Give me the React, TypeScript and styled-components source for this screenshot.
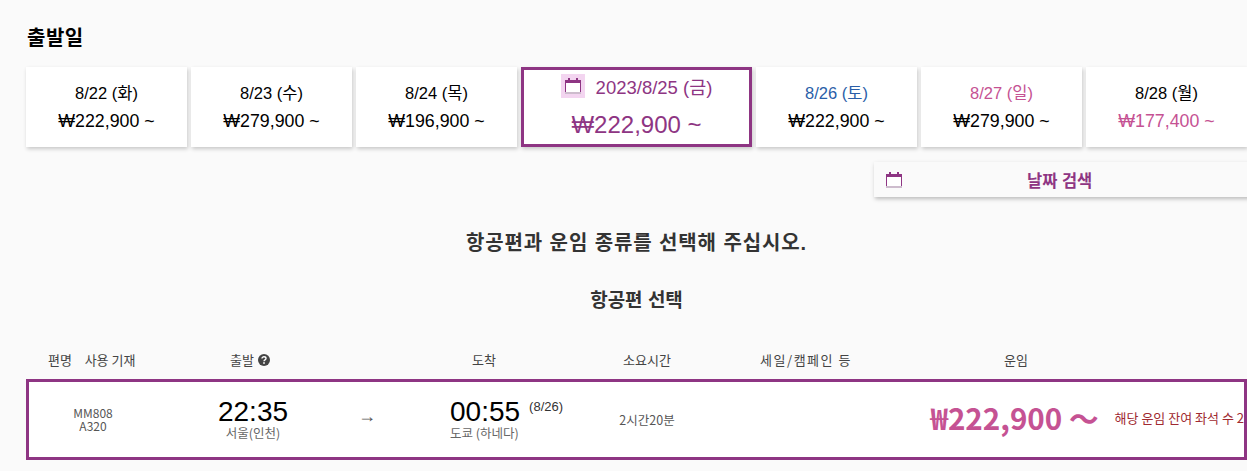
import React from 'react'
import styled, { createGlobalStyle } from 'styled-components'

const purple = '#8e3583'
const pink = '#c55293'
const sans = `"Liberation Sans", "Noto Sans CJK KR", sans-serif`
const noto = `"Noto Sans CJK KR", sans-serif`

const GlobalStyle = createGlobalStyle`
  html, body {
    margin: 0;
    padding: 0;
    background: #fafafa;
  }
`
const Page = styled.div`
  width: 1247px;
  height: 471px;
  box-sizing: border-box;
  padding: 26px 0 0 26px;
  overflow: hidden;
  font-family: ${sans};
  background: #fafafa;
`
const Title = styled.h2`
  margin: 0;
  height: 41px;
  padding-left: 1px;
  font-size: 20px;
  line-height: 24px;
  letter-spacing: 0.5px;
  font-weight: 700;
  color: #000;
`
const DateRow = styled.div`
  display: flex;
  gap: 4px;
  height: 80px;
`
const DateCard = styled.div`
  flex: 0 0 161px;
  display: flex;
  flex-direction: column;
  align-items: center;
  padding-top: 15px;
  box-sizing: border-box;
  background: #fff;
  box-shadow: 1px 2px 4px rgba(0, 0, 0, 0.2);
`
const DateLabel = styled.div<{ $tone?: string }>`
  font-size: 16.5px;
  line-height: 22px;
  color: ${(p) => p.$tone ?? '#000'};
`
const Price = styled.div<{ $tone?: string }>`
  margin-top: 6px;
  font-size: 17.8px;
  line-height: 22px;
  color: ${(p) => p.$tone ?? '#000'};
`
const SelectedCard = styled.div`
  flex: 0 0 231px;
  display: flex;
  flex-direction: column;
  align-items: center;
  box-sizing: border-box;
  padding-top: 4px;
  background: #fff;
  border: 3px solid ${purple};
  box-shadow: 1px 2px 4px rgba(0, 0, 0, 0.2);
  color: ${purple};
`
const SelectedHead = styled.div`
  display: flex;
  align-items: center;
  gap: 11px;
  height: 24px;
  font-size: 18.5px;
`
const IconBox = styled.span`
  display: flex;
  align-items: center;
  justify-content: center;
  width: 24px;
  height: 24px;
  background: #f3d5f0;
`
const SelectedPrice = styled.div`
  margin-top: 13px;
  font-size: 24px;
  line-height: 28px;
`
const SearchBar = styled.div`
  display: flex;
  align-items: center;
  height: 35px;
  margin: 15px -40px 0 848px;
  padding-left: 12px;
  background: #fafafa;
  box-shadow: 1px 2px 4px rgba(0, 0, 0, 0.25);
  color: ${purple};
`
const SearchLabel = styled.span`
  margin-left: 125px;
  font-size: 16.5px;
  font-weight: 700;
`
const Notice = styled.h3`
  margin: 33px 0 0;
  text-align: center;
  font-size: 20px;
  line-height: 26px;
  font-weight: 700;
  color: #333;
  letter-spacing: 0.9px;
`
const SectionTitle = styled.h4`
  margin: 33px 0 0;
  text-align: center;
  font-size: 19px;
  line-height: 24px;
  font-weight: 700;
  color: #333;
`
const HeaderRow = styled.div`
  display: grid;
  grid-template-columns: 68px 32px 248px 220px 106px 212px 208px 1fr;
  margin-top: 37px;
  height: 20px;
  font-family: ${noto};
  font-size: 13px;
  line-height: 20px;
  color: #444;
`
const HeadCell = styled.div<{ $spread?: number }>`
  white-space: nowrap;
  display: flex;
  justify-content: center;
  align-items: center;
  gap: 4px;
  letter-spacing: ${(p) => p.$spread ?? 0}px;
`
const FlightRow = styled.div`
  display: grid;
  grid-template-columns: 122px 204px 24px 181px 174px 1fr;
  align-items: center;
  box-sizing: border-box;
  height: 81px;
  margin-top: 9px;
  border: 3px solid ${purple};
  background: #fff;
  overflow: hidden;
`
const FlightCode = styled.div`
  padding-left: 6px;
  font-family: ${noto};
  font-size: 12px;
  line-height: 12.5px;
  color: #555;
  text-align: center;
`
const TimeBlock = styled.div<{ $inset?: number }>`
  display: flex;
  flex-direction: column;
  align-items: ${(p) => (p.$inset ? 'flex-start' : 'center')};
  padding-left: ${(p) => p.$inset ?? 0}px;
  padding-bottom: 2px;
`
const Time = styled.span`
  font-size: 28px;
  line-height: 28px;
  color: #000;
`
const NextDay = styled.sup`
  margin-left: 9px;
  font-size: 13px;
  line-height: 13px;
  vertical-align: 10px;
  color: #333;
`
const Place = styled.span`
  font-family: ${noto};
  font-size: 12.5px;
  line-height: 14px;
  color: #666;
`
const Arrow = styled.div`
  font-size: 18px;
  color: #555;
  text-align: center;
  padding-bottom: 6px;
`
const Duration = styled.div`
  font-family: ${noto};
  font-size: 12.5px;
  color: #555;
  text-align: center;
`
const FareCell = styled.div`
  display: flex;
  align-items: center;
  justify-content: flex-end;
  white-space: nowrap;
  padding-bottom: 5px;
`
const Fare = styled.span`
  font-family: ${noto};
  font-size: 29.6px;
  font-weight: 700;
  color: ${pink};
`
const Seats = styled.span`
  margin-left: 16px;
  font-family: ${noto};
  font-size: 13px;
  color: #a02a30;
`

const CalendarIcon = () => (
  <svg width="16" height="16" viewBox="0 0 16 16">
    <rect x="0" y="2" width="16" height="14" fill="#cdbccd" />
    <rect x="0" y="2" width="16" height="12" fill="#fff" />
    <rect x="0" y="2" width="16" height="3" fill={purple} />
    <rect x="0" y="5" width="1" height="9" fill={purple} />
    <rect x="15" y="5" width="1" height="9" fill={purple} />
    <rect x="3" y="0" width="2" height="3" fill={purple} />
    <rect x="11" y="0" width="2" height="3" fill={purple} />
  </svg>
)

const HelpIcon = () => (
  <svg width="12" height="12" viewBox="0 0 12 12">
    <circle cx="6" cy="6" r="6" fill="#444" />
    <path d="M4 4.6C4 3.4 5 2.8 6 2.8s2 .6 2 1.7c0 1.5-2 1.4-2 2.8" fill="none" stroke="#fff" strokeWidth="1.4" />
    <rect x="5.2" y="8.2" width="1.6" height="1.6" fill="#fff" />
  </svg>
)

type Day = { date: string; price: string; dateTone?: string; priceTone?: string }

const before: Day[] = [
  { date: '8/22 (화)', price: '₩222,900 ~' },
  { date: '8/23 (수)', price: '₩279,900 ~' },
  { date: '8/24 (목)', price: '₩196,900 ~' },
]
const after: Day[] = [
  { date: '8/26 (토)', price: '₩222,900 ~', dateTone: '#2a5ea8' },
  { date: '8/27 (일)', price: '₩279,900 ~', dateTone: pink },
  { date: '8/28 (월)', price: '₩177,400 ~', priceTone: pink },
]

const renderDay = (d: Day) => (
  <DateCard key={d.date}>
    <DateLabel $tone={d.dateTone}>{d.date}</DateLabel>
    <Price $tone={d.priceTone}>{d.price}</Price>
  </DateCard>
)

const App = () => (
  <Page>
    <GlobalStyle />
    <Title>출발일</Title>
    <DateRow>
      {before.map(renderDay)}
      <SelectedCard>
        <SelectedHead>
          <IconBox>
            <CalendarIcon />
          </IconBox>
          2023/8/25 (금)
        </SelectedHead>
        <SelectedPrice>₩222,900 ~</SelectedPrice>
      </SelectedCard>
      {after.map(renderDay)}
    </DateRow>
    <SearchBar>
      <CalendarIcon />
      <SearchLabel>날짜 검색</SearchLabel>
    </SearchBar>
    <Notice>항공편과 운임 종류를 선택해 주십시오.</Notice>
    <SectionTitle>항공편 선택</SectionTitle>
    <HeaderRow>
      <HeadCell>편명</HeadCell>
      <HeadCell>사용 기재</HeadCell>
      <HeadCell>
        출발 <HelpIcon />
      </HeadCell>
      <HeadCell>도착</HeadCell>
      <HeadCell>소요시간</HeadCell>
      <HeadCell $spread={1.5}>세일/캠페인 등</HeadCell>
      <HeadCell>운임</HeadCell>
    </HeaderRow>
    <FlightRow>
      <FlightCode>
        MM808
        <br />
        A320
      </FlightCode>
      <TimeBlock>
        <Time>22:35</Time>
        <Place>서울(인천)</Place>
      </TimeBlock>
      <Arrow>→</Arrow>
      <TimeBlock $inset={71}>
        <Time>
          00:55<NextDay>(8/26)</NextDay>
        </Time>
        <Place>도쿄 (하네다)</Place>
      </TimeBlock>
      <Duration>2시간20분</Duration>
      <FareCell>
        <Fare>₩222,900 ～</Fare>
        <Seats>해당 운임 잔여 좌석 수 2</Seats>
      </FareCell>
    </FlightRow>
  </Page>
)

export default App
